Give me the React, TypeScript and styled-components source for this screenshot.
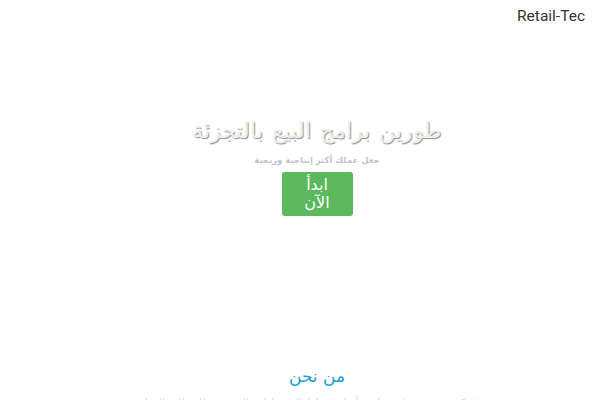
import React from 'react';
import styled, { createGlobalStyle } from 'styled-components';

const GlobalStyle = createGlobalStyle`
  html, body {
    margin: 0;
    padding: 0;
    background: #ffffff;
    overflow: hidden;
  }

  body {
    font-family: 'DejaVu Sans', 'Liberation Sans', sans-serif;
  }
`;

const Page = styled.div`
  width: 600px;
  height: 400px;
  overflow: hidden;
  display: flex;
  flex-direction: column;
`;

const Header = styled.header`
  display: flex;
  justify-content: flex-end;
  padding: 7px 15px 0 0;
  height: 30px;
  box-sizing: border-box;
`;

const Brand = styled.a`
  font-family: Roboto, 'Liberation Sans', sans-serif;
  font-size: 15.5px;
  color: #333333;
  text-decoration: none;
`;

const Main = styled.main`
  padding-left: 34px;
  display: flex;
  flex-direction: column;
`;

const Hero = styled.section`
  display: flex;
  flex-direction: column;
  align-items: center;
  padding-top: 91px;
  direction: rtl;
`;

const Title = styled.h1`
  margin: 0;
  font-family: 'DejaVu Sans', sans-serif;
  font-weight: 200;
  font-size: 22px;
  word-spacing: 2px;
  color: #eeeeee;
  text-shadow: 1px 1px 1px #909090;
  line-height: 30px;
`;

const Subtitle = styled.p`
  margin: 8px 0 0 0;
  font-family: 'DejaVu Sans', sans-serif;
  font-size: 8.5px;
  font-weight: 700;
  color: #c4c4c4;
  line-height: 12px;
`;

const StartButton = styled.a`
  margin-top: 6px;
  width: 71px;
  height: 44px;
  box-sizing: border-box;
  display: flex;
  align-items: center;
  justify-content: center;
  text-align: center;
  padding: 2px 16px;
  background: #5cb85c;
  border-radius: 3px;
  color: #ffffff;
  font-family: 'DejaVu Sans', sans-serif;
  font-size: 16px;
  line-height: 18px;
  text-decoration: none;
`;

const About = styled.section`
  margin-top: 148px;
  display: flex;
  flex-direction: column;
  align-items: center;
  direction: rtl;
`;

const AboutTitle = styled.h2`
  margin: 0;
  font-family: 'DejaVu Sans', sans-serif;
  font-weight: 400;
  font-size: 17px;
  line-height: 24px;
  color: #1e9fd2;
`;

const AboutText = styled.p`
  margin: 6px 0 0 0;
  width: 440px;
  text-align: center;
  font-size: 11px;
  line-height: 18px;
  color: #dcdcdc;
`;

export default function App() {
  return (
    <Page>
      <GlobalStyle />
      <Header>
        <Brand href="#">Retail-Tec</Brand>
      </Header>
      <Main>
        <Hero>
          <Title>طورين برامج البيع بالتجزئة</Title>
          <Subtitle>جعل عملك أكثر إنتاجية وربحية</Subtitle>
          <StartButton href="#">ابدأ الآن</StartButton>
        </Hero>
        <About>
          <AboutTitle>من نحن</AboutTitle>
          <AboutText>
            نحن شركة متخصصة في تطوير أنظمة نقاط البيع وإدارة المخزون للمحلات التجارية
          </AboutText>
        </About>
      </Main>
    </Page>
  );
}
